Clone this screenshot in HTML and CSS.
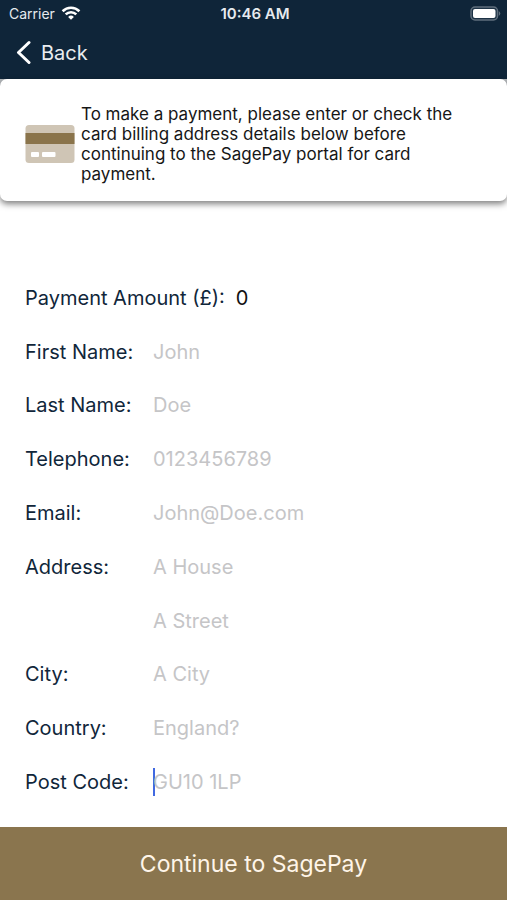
FILE: index.html
```html
<!DOCTYPE html>
<html lang="en">
<head>
<meta charset="utf-8">
<meta name="viewport" content="width=device-width, initial-scale=1">
<title>Payment</title>
<link rel="stylesheet" href="styles.css">
</head>
<body>
<header class="top">
  <div class="status">
    <div class="carrier">
      <span>Carrier</span>
      <svg width="20" height="16" viewBox="0 0 20 16" fill="none" stroke="#fff" stroke-width="2.6" aria-hidden="true">
        <path d="M1.6 5.200a12 12 0 0 1 16.8 0M4.7 8.400a7.6 7.6 0 0 1 10.6 0"/>
        <path d="M10 13.800 7.1 10.900a4.2 4.2 0 0 1 5.8 0z" fill="#fff" stroke="none"/>
      </svg>
    </div>
    <time class="clock">10:46 AM</time>
    <svg class="battery" width="31" height="16" viewBox="0 0 31 16" aria-hidden="true">
      <rect x="1" y="1" width="26.500" height="13" rx="4" fill="#1d3346" stroke="#5f6e7c" stroke-width="1.500"/>
      <rect x="3" y="3" width="22.500" height="9" rx="2" fill="#fff"/>
      <path d="M28.800 5q3 2.500 0 5z" fill="#5f6e7c"/>
    </svg>
  </div>
  <nav class="nav">
    <a class="back" href="#">
      <svg width="15" height="26" viewBox="0 0 15 26" fill="none" stroke="#fff" stroke-width="3" stroke-linecap="round" stroke-linejoin="round" aria-hidden="true">
        <path d="M13 2.500 2.500 12.500l10.500 10"/>
      </svg>
      <span>Back</span>
    </a>
  </nav>
</header>
<main class="main">
  <div class="backing">
    <section class="notice">
      <svg class="card-icon" width="50" height="40" viewBox="0 0 50 40" aria-hidden="true">
        <rect x=".5" y="1" width="49" height="38" rx="3.500" fill="#cfc5b5"/>
        <rect x=".5" y="9" width="49" height="11" fill="#8a744b"/>
        <rect x="6" y="28" width="8" height="5" rx="1" fill="#fff"/>
        <rect x="17" y="28" width="13.500" height="5" rx="1" fill="#fff"/>
      </svg>
      <p class="notice-text">To make a payment, please enter or check the card billing address details below before continuing to the SagePay portal for card payment.</p>
    </section>
  </div>
  <form class="form" id="payment">
    <div class="row amount"><label for="amount">Payment Amount (£):</label><input id="amount" type="text" inputmode="decimal" value="0"></div>
    <div class="row"><label for="first">First Name:</label><input id="first" type="text" placeholder="John"></div>
    <div class="row"><label for="last">Last Name:</label><input id="last" type="text" placeholder="Doe"></div>
    <div class="row"><label for="phone">Telephone:</label><input id="phone" type="tel" placeholder="0123456789"></div>
    <div class="row"><label for="email">Email:</label><input id="email" type="email" placeholder="John@Doe.com"></div>
    <div class="row"><label for="house">Address:</label><input id="house" type="text" placeholder="A House"></div>
    <div class="row"><span></span><input id="street" type="text" placeholder="A Street" aria-label="Address line 2"></div>
    <div class="row"><label for="city">City:</label><input id="city" type="text" placeholder="A City"></div>
    <div class="row"><label for="country">Country:</label><input id="country" type="text" placeholder="England?"></div>
    <div class="row active"><label for="post">Post Code:</label><input id="post" type="text" placeholder="GU10 1LP"></div>
  </form>
</main>
<button class="submit" type="submit" form="payment">Continue to SagePay</button>
</body>
</html>
```

FILE: styles.css
```css
* {
  box-sizing: border-box;
}

body {
  margin: 0;
  min-height: 100vh;
  display: flex;
  flex-direction: column;
  background: #fff;
  color: #10263a;
  font-family: Inter, "Liberation Sans", sans-serif;
  font-size: 20px;
}

.top {
  background: #0f2539;
  color: #fff;
}

.status {
  display: grid;
  grid-template-columns: 1fr auto 1fr;
  align-items: center;
  height: 27px;
  padding: 0 6px 0 9px;
  font-size: 14px;
  color: #e6eaee;
}

.carrier {
  display: flex;
  align-items: center;
  gap: 6px;
}

.clock {
  font-size: 15px;
  font-weight: 600;
}

.battery {
  justify-self: end;
}

.nav {
  display: flex;
  align-items: center;
  height: 52px;
  padding: 0 16px;
}

.back {
  display: flex;
  align-items: center;
  gap: 10px;
  color: #e9edf0;
  text-decoration: none;
}

.main {
  flex: 1;
  display: flex;
  flex-direction: column;
}

.backing {
  background: linear-gradient(#b4b8bb 50%, #fff 50%);
}

.notice {
  display: flex;
  align-items: center;
  gap: 6px;
  padding: 25px 48px 17px 25px;
  border-radius: 7px;
  background: #fff;
  box-shadow: 0 3px 6px rgba(0, 0, 0, 0.5);
}

.card-icon {
  flex: none;
}

.notice-text {
  margin: 0;
  color: #161616;
  font-size: 17px;
  line-height: 20px;
}

.form {
  flex: 1;
  display: grid;
  grid-auto-rows: 1fr;
  margin: 70px 25px 18px;
}

.row {
  display: grid;
  grid-template-columns: 128px 1fr;
  align-items: center;
}

.amount {
  grid-template-columns: auto 1fr;
  column-gap: 11px;
}

.row input {
  width: 100%;
  min-width: 0;
  height: 28px;
  padding: 0;
  border: 0;
  outline: 0;
  background: none;
  color: #111;
  font: inherit;
}

.row input::placeholder {
  color: #c5c5c7;
  opacity: 1;
}

.row.active input {
  background: linear-gradient(#4169e1, #4169e1) left / 2px 100% no-repeat;
  caret-color: #4169e1;
}

.submit {
  height: 73px;
  border: 0;
  background: #8a754e;
  color: #fff5e9;
  font-family: inherit;
  font-size: 23px;
}
```
